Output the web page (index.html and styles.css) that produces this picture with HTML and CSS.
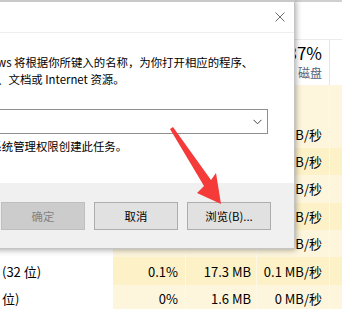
FILE: index.html
```html
<!DOCTYPE html>
<html lang="zh-CN">
<head>
    <meta charset="UTF-8">
    <meta name="viewport" content="width=device-width, initial-scale=1.0">
    <title>新建任务</title><link rel="stylesheet" href="styles.css">
</head>
<body>
    <div class="taskmgr">
        <div class="tabs"></div>
        <div class="row head">
            <div class="cell name"></div>
            <div class="cell cpu"></div>
            <div class="cell mem"></div>
            <div class="cell disk">
                <div class="pct">37%</div>
                <div class="label">磁盘</div>
            </div>
            <div class="cell net"></div>
        </div>
        <div class="row group">
            <div class="cell name"></div>
            <div class="cell cpu"></div>
            <div class="cell mem"></div>
            <div class="cell disk"></div>
            <div class="cell net"></div>
        </div>
        <div id="rows"></div>
    </div>

    <div class="dialog">
        <div class="titlebar">
            <svg class="close" width="10" height="10" viewBox="0 0 10 10">
                <path d="M0.5 0.5 L9.5 9.5 M9.5 0.5 L0.5 9.5" stroke="#6e6e6e" stroke-width="1" fill="none"/>
            </svg>
        </div>
        <div class="content">
            <p class="desc">Windows 将根据你所键入的名称，为你打开相应的程序、<br>文件夹、文档或 Internet 资源。</p>
            <div class="open-row">
                <span class="open-label">打开(O):</span>
                <div class="combo">
                    <svg width="9" height="6" viewBox="0 0 9 6">
                        <path d="M0.5 0.8 L4.5 4.8 L8.5 0.8" stroke="#444" stroke-width="1" fill="none"/>
                    </svg>
                </div>
            </div>
            <div class="admin-row">
                <span class="check"></span>
                <span>以系统管理权限创建此任务。</span>
            </div>
        </div>
        <div class="footer">
            <button class="btn" disabled>确定</button>
            <button class="btn">取消</button>
            <button class="btn">浏览(B)...</button>
        </div>
    </div>

    <svg class="arrow" width="342" height="309" viewBox="0 0 342 309">
        <polygon points="170,129 204,186 197,193 221,204 216,173 211,180 173,127" fill="#f53a3a"/>
    </svg>

    <script>
        const processes = [
            { name: '', cpu: '', mem: '', disk: '0 MB/秒', net: '0 Mbps' },
            { name: '', cpu: '', mem: '', disk: '0 MB/秒', net: '0 Mbps' },
            { name: '', cpu: '', mem: '', disk: '0 MB/秒', net: '0 Mbps' },
            { name: '', cpu: '', mem: '', disk: '0 MB/秒', net: '0 Mbps' },
            { name: '', cpu: '', mem: '', disk: '0 MB/秒', net: '0 Mbps' },
            { name: '(32 位)', cpu: '0.1%', mem: '17.3 MB', disk: '0.1 MB/秒', net: '0 Mbps' },
            { name: '位)', cpu: '0%', mem: '1.6 MB', disk: '0 MB/秒', net: '0 Mbps' }
        ];

        const renderRows = () => {
            document.getElementById('rows').innerHTML = processes.map((p, idx) => `
                <div class="row ${idx % 2 ? 'dark' : 'light'}">
                    <div class="cell name">${p.name}</div>
                    <div class="cell cpu">${p.cpu}</div>
                    <div class="cell mem">${p.mem}</div>
                    <div class="cell disk">${p.disk}</div>
                    <div class="cell net">${p.net}</div>
                </div>
            `).join('');
        };

        renderRows();
    </script>
</body>
</html>
```

FILE: styles.css
```css
body {
    margin: 0;
    width: 342px;
    height: 309px;
    overflow: hidden;
    position: relative;
    background-color: #fff;
    font-family: "Noto Sans CJK SC", sans-serif;
    color: #000;
}

.taskmgr {
    border-top: 2px solid #d0d0d0;
}

.tabs {
    height: 37px;
    border-bottom: 1px solid #ececec;
}

.row {
    display: flex;
    height: 27.4px;
}

.cell {
    flex: none;
    box-sizing: border-box;
    display: flex;
    align-items: center;
    justify-content: flex-end;
    padding-right: 7px;
    font-size: 13px;
    white-space: nowrap;
    background-color: #fdf1c7;
    border-right: 1px solid #fdf8e8;
}

.name {
    width: 113px;
    justify-content: flex-start;
    padding-left: 2px;
    background-color: #fff;
    border-right: none;
}

.cpu { width: 73px; }
.mem { width: 71px; padding-right: 5px; }
.disk { width: 73px; }
.net { width: 70px; padding-right: 12px; }

.light .cell.cpu,
.light .cell.mem,
.light .cell.disk,
.light .cell.net {
    background-color: #fef6dc;
}

.head {
    height: 45px;
}

.head .cell {
    background-color: #fff;
    border-right: 1px solid #e6e6e6;
    flex-direction: column;
    align-items: flex-end;
    justify-content: flex-start;
    padding-top: 2px;
}

.head .name {
    border-right: none;
}

.pct {
    font-size: 17px;
    line-height: 22px;
}

.label {
    font-size: 12px;
    line-height: 18px;
    color: #4d6381;
}

.group {
    height: 35.4px;
}

.group .cell.cpu,
.group .cell.mem,
.group .cell.disk,
.group .cell.net {
    background-color: #fef6dc;
}

/* dialog */
.dialog {
    position: absolute;
    left: -110px;
    top: 0;
    width: 405px;
    height: 249px;
    box-sizing: border-box;
    background-color: #fff;
    border: 1px solid #c4c4c4;
    border-top: 2px solid #c9c9c9;
    box-shadow: 1px 1px 6px rgba(0, 0, 0, 0.35);
    display: flex;
    flex-direction: column;
    font-size: 11.4px;
}

.titlebar {
    height: 30px;
    border-bottom: 1px solid #efefef;
    display: flex;
    align-items: center;
    justify-content: flex-end;
    padding-right: 9px;
}

.content {
    height: 150px;
    padding-top: 21px;
    box-sizing: border-box;
}

.desc {
    margin: 0 0 0 72px;
    line-height: 17px;
}

.open-row {
    display: flex;
    align-items: center;
    margin-top: 21px;
    padding-left: 12px;
}

.open-label {
    width: 88px;
}

.combo {
    width: 277px;
    height: 25px;
    box-sizing: border-box;
    border: 1px solid #8f8f8f;
    display: flex;
    align-items: center;
    justify-content: flex-end;
    padding-right: 5px;
}

.admin-row {
    display: flex;
    align-items: center;
    margin-top: 4px;
    padding-left: 66px;
    line-height: 17px;
}

.check {
    width: 12px;
    height: 12px;
    border: 1px solid #333;
    margin-right: 8px;
}

.footer {
    flex: 1;
    background-color: #f0f0f0;
    display: flex;
    justify-content: flex-end;
    align-items: flex-start;
    gap: 9px;
    padding: 19px 23px 0 0;
}

.btn {
    width: 84px;
    height: 28px;
    font-family: "Noto Sans CJK SC", sans-serif;
    font-size: 11.4px;
    background-color: #e1e1e1;
    border: 1px solid #adadad;
    color: #000;
    padding: 0;
}

.btn:disabled {
    background-color: #cccccc;
    border-color: #bfbfbf;
    color: #838383;
}

.arrow {
    position: absolute;
    left: 0;
    top: 0;
}
```
